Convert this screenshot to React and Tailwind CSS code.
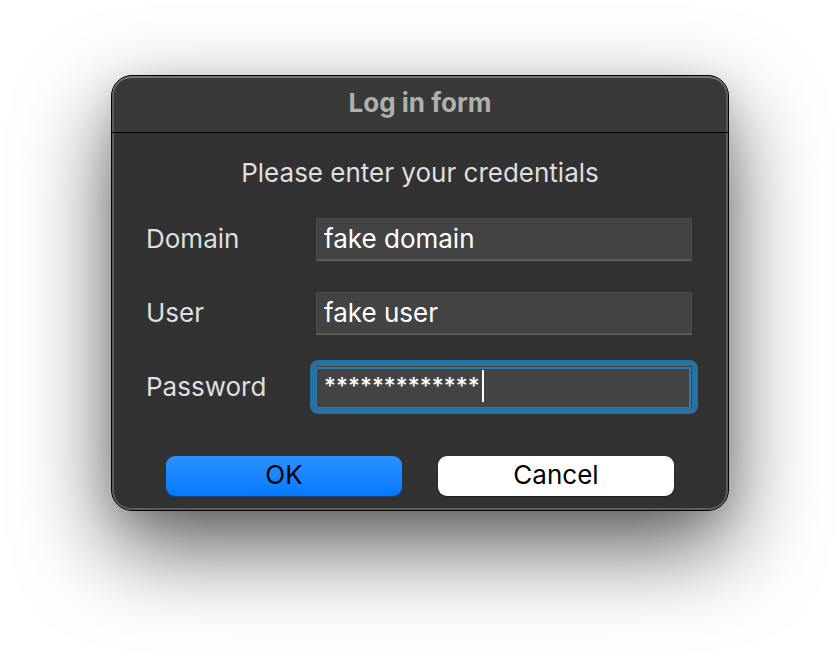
const fieldClass =
  "block h-[42px] w-full border border-b-0 border-[#4c4c4c] bg-[#434343] px-[7px] pb-0.5 text-white outline-none shadow-[0_1px_0_#606060,inset_0_-1px_0_#575757]";

function Field({ id, label, children }) {
  return (
    <div className="grid grid-cols-[170px_minmax(0,1fr)] items-center">
      <label htmlFor={id} className="text-[#dfdfdf]">
        {label}
      </label>
      {children}
    </div>
  );
}

export default function App() {
  return (
    <main className="min-h-screen overflow-hidden bg-white pt-[75px] text-[26px] leading-8 font-[Inter,sans-serif]">
      <section
        aria-labelledby="form-title"
        className="mx-auto w-full max-w-[618px] rounded-[21px] shadow-[0_36px_90px_rgba(0,0,0,0.64),0_10px_30px_rgba(0,0,0,0.1)]"
      >
        <div className="overflow-hidden rounded-[21px] border border-black bg-[#323232]">
          <header className="h-[57px] rounded-t-[20px] border-b border-black bg-[#393937] pt-[11px] text-center shadow-[inset_0_2px_0_#757573,inset_2px_0_0_#5d5d5b,inset_-2px_0_0_#5d5d5b]">
            <h1 id="form-title" className="text-[26px] font-bold text-[#b0b0ae]">
              Log in form
            </h1>
          </header>
          <form
            className="rounded-b-[20px] pt-6 pb-[14px] shadow-[inset_0_-2px_0_#5c5c5c,inset_2px_0_0_#5c5c5c,inset_-2px_0_0_#5c5c5c]"
            onSubmit={(e) => e.preventDefault()}
          >
            <p className="text-center text-[#dfdfdf]">Please enter your credentials</p>
            <div className="mt-[29px] flex flex-col gap-8 pr-9 pl-[34px]">
              <Field id="domain" label="Domain">
                <input id="domain" type="text" defaultValue="fake domain" className={fieldClass} />
              </Field>
              <Field id="user" label="User">
                <input id="user" type="text" defaultValue="fake user" className={fieldClass} />
              </Field>
              <Field id="password" label="Password">
                <div className="relative rounded-[3px] shadow-[0_0_0_6px_#2672a3]">
                  <input
                    id="password"
                    type="text"
                    autoComplete="off"
                    defaultValue="*************"
                    className="block h-[42px] w-full border-t border-r border-[#434343] bg-[#434343] px-2 pb-1 text-[23px] font-medium text-white caret-transparent outline-none shadow-[inset_1px_0_0_#3579a8,inset_0_2px_0_#3579a8,inset_-2px_0_0_#3579a8,inset_0_-1px_0_#3579a8]"
                  />
                  <span className="absolute top-1 left-[166px] h-8 w-0.5 bg-white" />
                </div>
              </Field>
            </div>
            <div className="mt-12 grid grid-cols-2 gap-9 px-[54px]">
              <button
                type="submit"
                className="h-10 rounded-[9px] bg-linear-to-b from-[#2b91ff] to-[#007aff] pb-0.5 text-black shadow-[0_1px_2px_rgba(0,90,200,0.5)]"
              >
                OK
              </button>
              <button
                type="button"
                className="h-10 rounded-[9px] bg-white pb-0.5 text-black shadow-[0_1px_2px_rgba(0,0,0,0.4)]"
              >
                Cancel
              </button>
            </div>
          </form>
        </div>
      </section>
    </main>
  );
}
